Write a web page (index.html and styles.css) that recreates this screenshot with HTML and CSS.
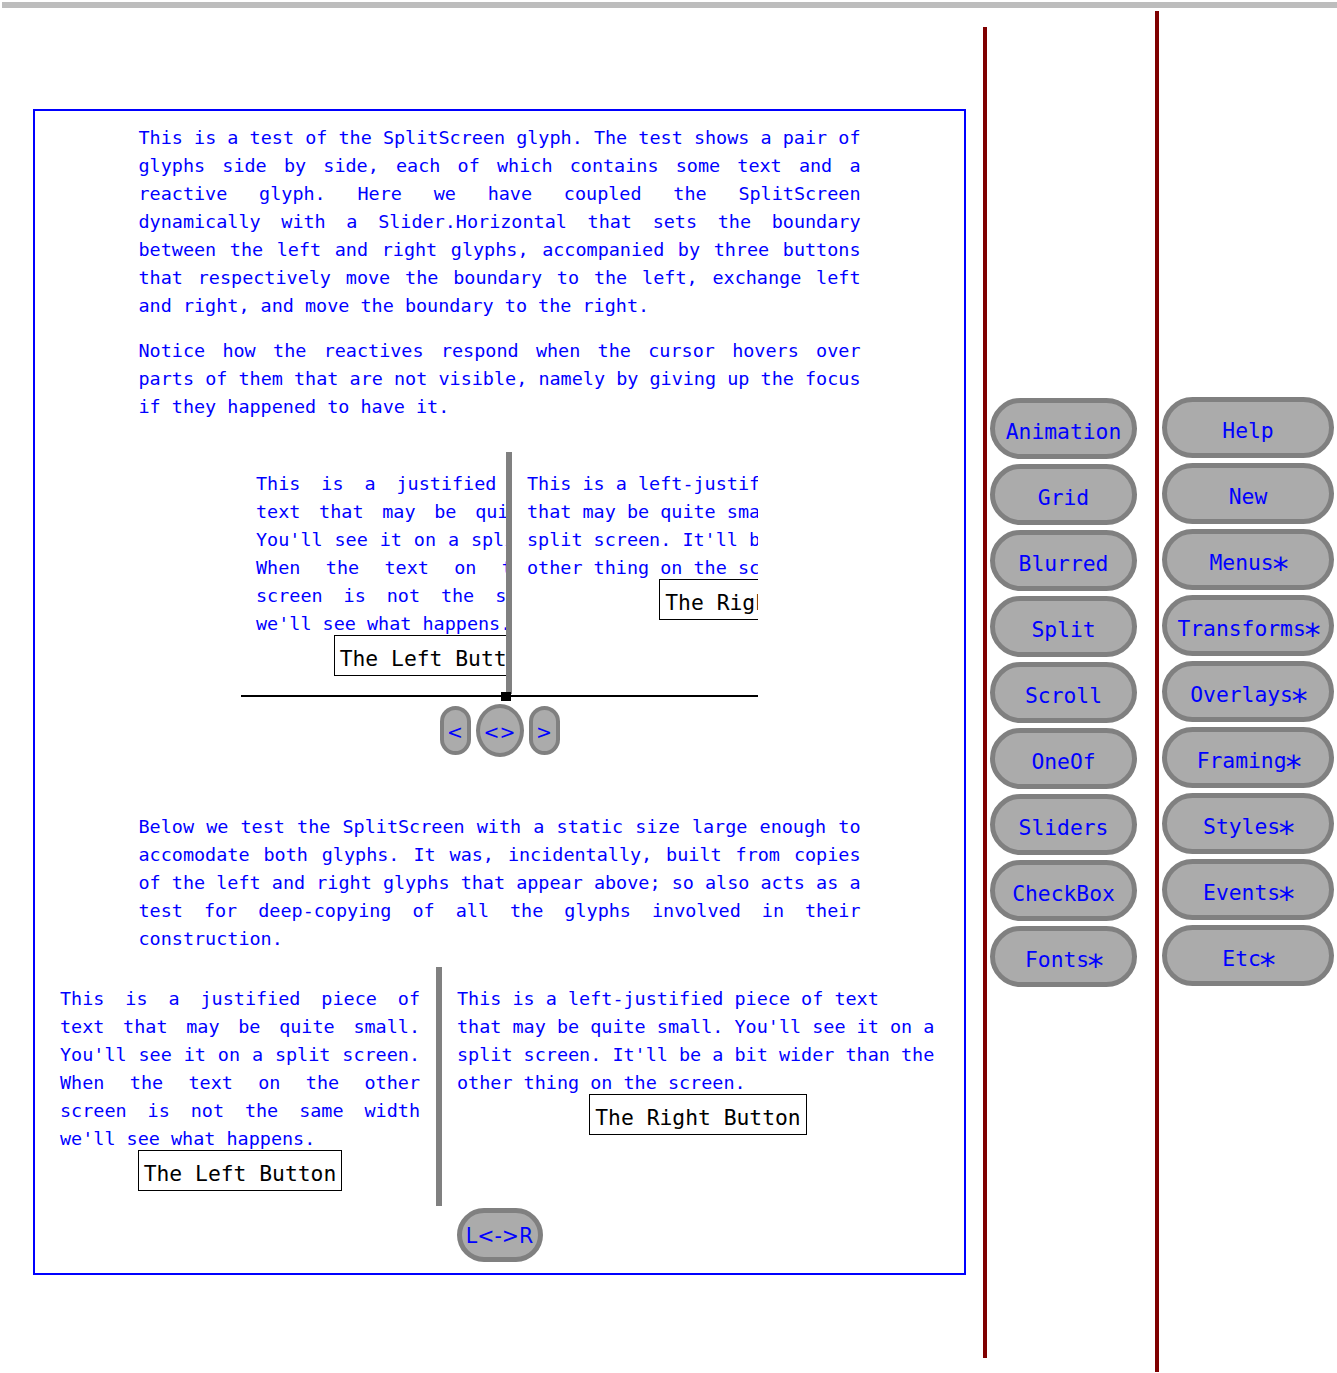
FILE: index.html
```html
<!DOCTYPE html>
<html>
<head>
<meta charset="utf-8">
<title>SplitScreen test</title>
<link rel="stylesheet" href="styles.css">
</head>
<body>
<div class="topbar"></div>
<div class="main">
  <div class="frame">
    <div class="para">
      <div class="ln">This is a test of the SplitScreen glyph. The test shows a pair of</div>
      <div class="ln">glyphs side by side, each of which contains some text and a</div>
      <div class="ln">reactive glyph. Here we have coupled the SplitScreen</div>
      <div class="ln">dynamically with a Slider.Horizontal that sets the boundary</div>
      <div class="ln">between the left and right glyphs, accompanied by three buttons</div>
      <div class="ln">that respectively move the boundary to the left, exchange left</div>
      <div class="ln last">and right, and move the boundary to the right.</div>
    </div>
    <div class="para p2">
      <div class="ln">Notice how the reactives respond when the cursor hovers over</div>
      <div class="ln">parts of them that are not visible, namely by giving up the focus</div>
      <div class="ln last">if they happened to have it.</div>
    </div>

    <div class="split split-dyn">
      <div class="pane pane-left">
        <div class="glyph glyph-left">
          <div class="jtext">
            <div class="ln">This is a justified piece of</div>
            <div class="ln">text that may be quite small.</div>
            <div class="ln">You'll see it on a split screen.</div>
            <div class="ln">When the text on the other</div>
            <div class="ln">screen is not the same width</div>
            <div class="ln last">we'll see what happens.</div>
          </div>
          <div class="tbtn-row"><span class="tbtn">The Left Button</span></div>
        </div>
      </div>
      <div class="divider"></div>
      <div class="pane pane-right">
        <div class="glyph glyph-right">
          <div class="ltext">This is a left-justified piece of text<br>that may be quite small. You'll see it on a<br>split screen. It'll be a bit wider than the<br>other thing on the screen.</div>
          <div class="tbtn-row"><span class="tbtn">The Right Button</span></div>
        </div>
      </div>
    </div>
    <div class="slider"><div class="knob"></div></div>
    <div class="navrow">
      <div class="nav nav-small">&lt;</div>
      <div class="nav nav-mid">&lt;&gt;</div>
      <div class="nav nav-small">&gt;</div>
    </div>

    <div class="para p3">
      <div class="ln">Below we test the SplitScreen with a static size large enough to</div>
      <div class="ln">accomodate both glyphs. It was, incidentally, built from copies</div>
      <div class="ln">of the left and right glyphs that appear above; so also acts as a</div>
      <div class="ln">test for deep-copying of all the glyphs involved in their</div>
      <div class="ln last">construction.</div>
    </div>

    <div class="split split-static">
      <div class="pane">
        <div class="glyph glyph-left">
          <div class="jtext">
            <div class="ln">This is a justified piece of</div>
            <div class="ln">text that may be quite small.</div>
            <div class="ln">You'll see it on a split screen.</div>
            <div class="ln">When the text on the other</div>
            <div class="ln">screen is not the same width</div>
            <div class="ln last">we'll see what happens.</div>
          </div>
          <div class="tbtn-row"><span class="tbtn">The Left Button</span></div>
        </div>
      </div>
      <div class="divider"></div>
      <div class="pane">
        <div class="glyph glyph-right">
          <div class="ltext">This is a left-justified piece of text<br>that may be quite small. You'll see it on a<br>split screen. It'll be a bit wider than the<br>other thing on the screen.</div>
          <div class="tbtn-row"><span class="tbtn">The Right Button</span></div>
        </div>
      </div>
    </div>
    <div class="swap">L&lt;-&gt;R</div>
  </div>

  <div class="col col1">
    <div class="pill">Animation</div>
    <div class="pill">Grid</div>
    <div class="pill">Blurred</div>
    <div class="pill">Split</div>
    <div class="pill">Scroll</div>
    <div class="pill">OneOf</div>
    <div class="pill">Sliders</div>
    <div class="pill">CheckBox</div>
    <div class="pill">Fonts<span class="ast">∗</span></div>
  </div>
  <div class="col col2">
    <div class="pill">Help</div>
    <div class="pill">New</div>
    <div class="pill">Menus<span class="ast">∗</span></div>
    <div class="pill">Transforms<span class="ast">∗</span></div>
    <div class="pill">Overlays<span class="ast">∗</span></div>
    <div class="pill">Framing<span class="ast">∗</span></div>
    <div class="pill">Styles<span class="ast">∗</span></div>
    <div class="pill">Events<span class="ast">∗</span></div>
    <div class="pill">Etc<span class="ast">∗</span></div>
  </div>
</div>
</body>
</html>
```

FILE: styles.css
```css
html, body {
  margin: 0;
  padding: 0;
  background: #ffffff;
  overflow: hidden;
}

body {
  font-family: "DejaVu Sans Mono", monospace;
  color: #0000ff;
}

.topbar {
  margin: 2px 0 0 2px;
  height: 6px;
  background: #bdbdbd;
}

.main {
  display: flex;
  align-items: flex-start;
}

/* ---------- main blue frame ---------- */
.frame {
  box-sizing: border-box;
  width: 933px;
  height: 1166px;
  margin: 101px 0 0 33px;
  border: 2px solid #0000ff;
  padding-top: 13px;
  display: flex;
  flex-direction: column;
  align-items: center;
}

.para {
  width: 722px;
  font-size: 18.45px;
  line-height: 28px;
  white-space: nowrap;
}

.ln {
  text-align: justify;
  text-align-last: justify;
}

.ln.last {
  text-align: left;
  text-align-last: left;
}

.p2 {
  margin-top: 17px;
}

.p3 {
  margin-top: 56px;
}

/* ---------- split screens ---------- */
.split {
  display: flex;
  align-items: stretch;
}

.split-dyn {
  width: 517px;
  margin-top: 31px;
}

.split-static {
  margin-top: 14px;
}

.pane {
  overflow: hidden;
  flex-shrink: 0;
}

.pane-left {
  width: 265px;
}

.pane-right {
  width: 246px;
}

.divider {
  width: 6px;
  flex-shrink: 0;
  background: #808080;
}

.glyph {
  box-sizing: border-box;
  padding: 18px 0 18px 15px;
  font-size: 18.45px;
  line-height: 28px;
  white-space: nowrap;
}

.split-static .glyph {
  padding-bottom: 15px;
}

.glyph-left {
  width: 391px;
}

.glyph-right {
  width: 512px;
}

.jtext {
  width: 360px;
}

.ltext {
  width: 482px;
}

.glyph-left .tbtn-row {
  width: 360px;
}

.glyph-right .tbtn-row {
  width: 482px;
}

.tbtn-row {
  margin-top: -3px;
  text-align: center;
  line-height: 0;
}

.tbtn {
  display: inline-block;
  border: 1px solid #000000;
  padding: 6px 5px 0;
  font-size: 21.33px;
  line-height: 33px;
  color: #000000;
}

/* ---------- slider ---------- */
.slider {
  position: relative;
  width: 517px;
  height: 9px;
  margin-top: -2px;
}

.slider::before {
  content: "";
  position: absolute;
  left: 0;
  right: 0;
  top: 3px;
  height: 2px;
  background: #000000;
}

.knob {
  position: absolute;
  left: 260px;
  top: 0;
  width: 10px;
  height: 9px;
  background: #000000;
}

/* ---------- nav buttons ---------- */
.navrow {
  display: flex;
  align-items: center;
  gap: 5px;
  margin-top: 3px;
}

.nav {
  box-sizing: border-box;
  display: flex;
  align-items: center;
  justify-content: center;
  border: 4px solid #808080;
  background: #ababab;
  color: #0000ff;
  font-family: "DejaVu Sans", sans-serif;
  font-size: 19px;
  padding-top: 3px;
}

.nav-small {
  width: 31px;
  height: 49px;
  border-radius: 16px;
}

.nav-mid {
  width: 48px;
  height: 53px;
  border-radius: 50%;
}

.swap {
  box-sizing: border-box;
  width: 86px;
  height: 54px;
  margin-top: 2px;
  border: 5px solid #808080;
  border-radius: 27px;
  background: #ababab;
  color: #0000ff;
  font-family: "DejaVu Sans", sans-serif;
  font-size: 20.5px;
  display: flex;
  align-items: center;
  justify-content: center;
  padding-top: 2px;
}

/* ---------- right columns ---------- */
.col {
  box-sizing: border-box;
  display: flex;
  flex-direction: column;
  justify-content: center;
  gap: 5px;
  border-left: 4px solid #7f0000;
  padding-left: 3px;
}

.col1 {
  width: 172px;
  height: 1331px;
  margin: 19px 0 0 17px;
}

.col2 {
  width: 182px;
  height: 1361px;
  margin-top: 3px;
}

.pill {
  box-sizing: border-box;
  height: 61px;
  border: 5px solid #808080;
  border-radius: 31px;
  background: #ababab;
  color: #0000ff;
  font-size: 21.33px;
  line-height: 43px;
  padding-top: 7px;
  text-align: center;
  white-space: nowrap;
}

.ast {
  display: inline-block;
  transform: scale(1.5);
}

.col1 .pill {
  width: 147px;
}

.col2 .pill {
  width: 172px;
}
```
